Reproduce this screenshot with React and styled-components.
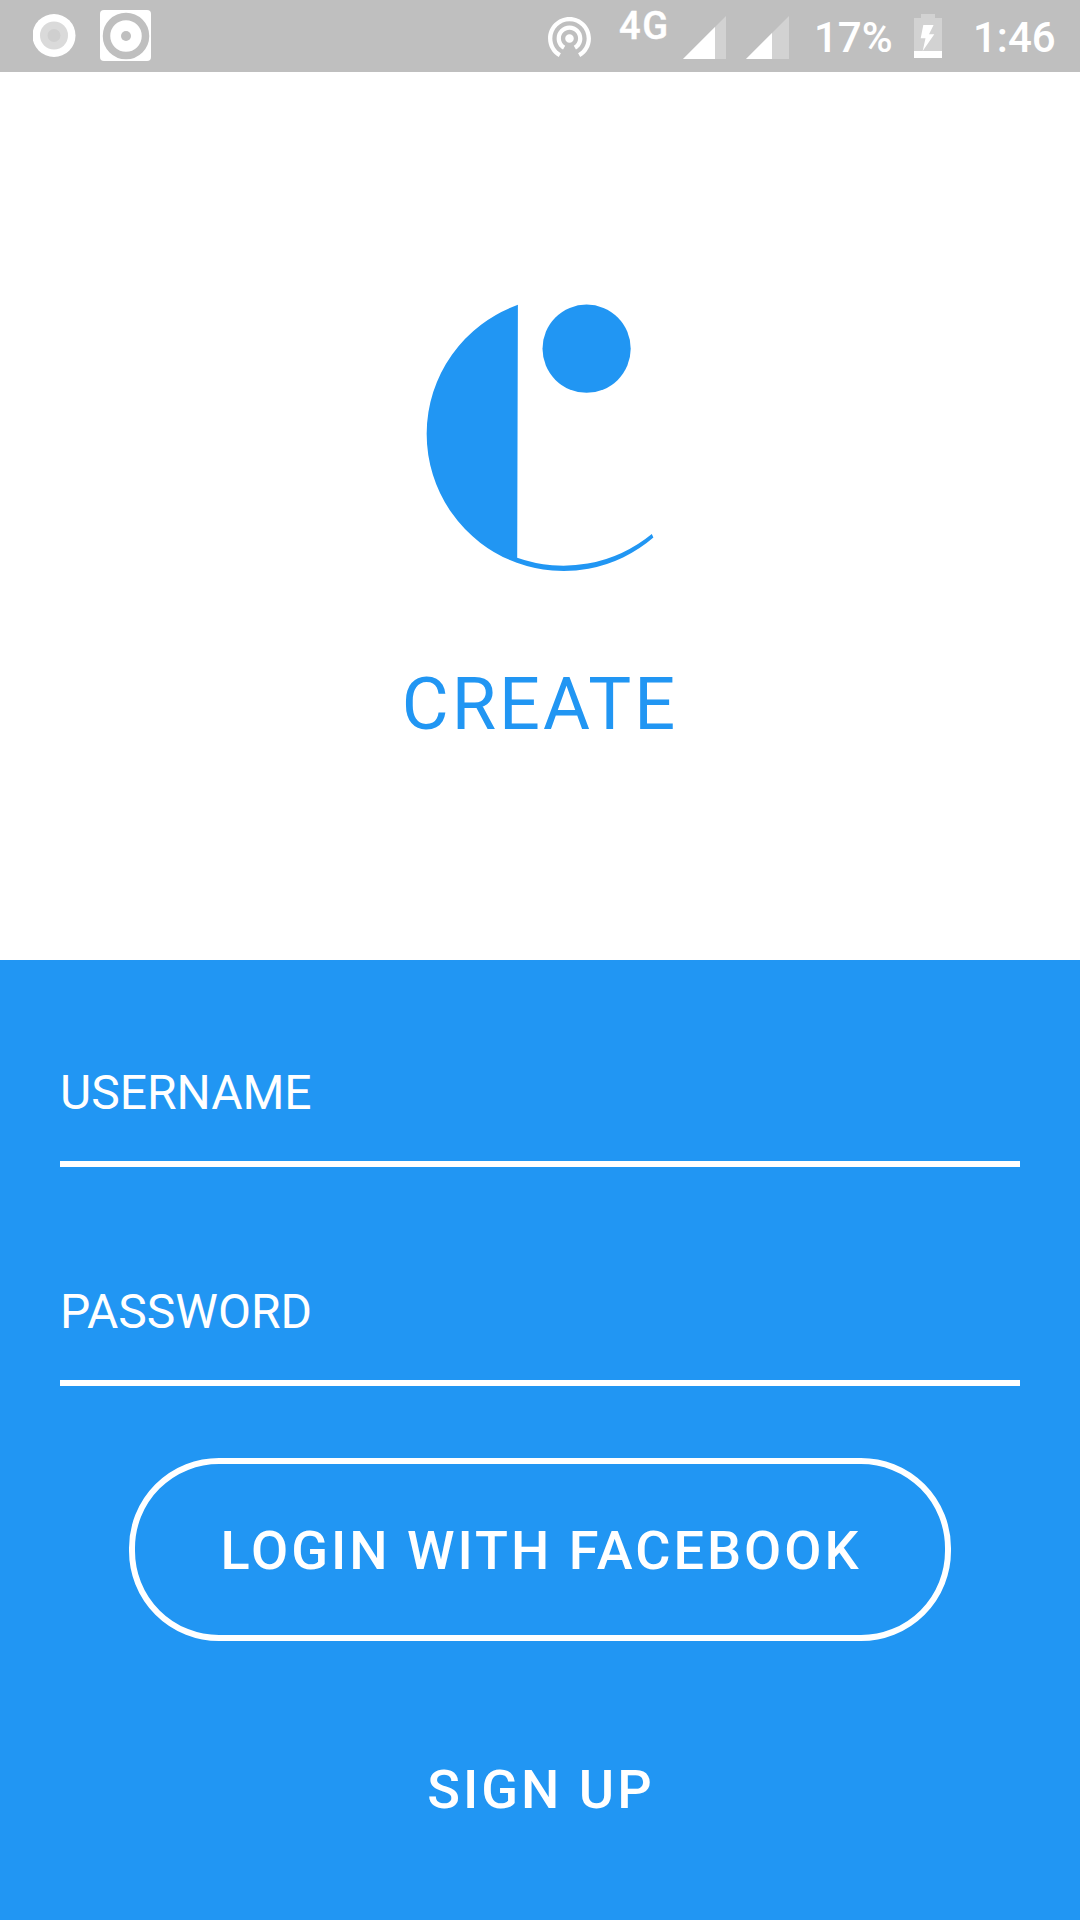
import React from "react";
import styled, { createGlobalStyle } from "styled-components";

const BLUE = "#2196f3";
const FAINT = "#d2d2d2";

const GlobalStyle = createGlobalStyle`
  *, *::before, *::after { box-sizing: border-box; }
  body { margin: 0; background: #fff; font-family: Roboto, "Noto Sans", sans-serif; }
  svg { display: block; }
`;

const Screen = styled.div`
  display: flex;
  flex-direction: column;
  width: 1080px;
  height: 1920px;
  overflow: hidden;
  background: #fff;
`;

const StatusBar = styled.header`
  display: flex;
  justify-content: space-between;
  height: 72px;
  flex: none;
  background: #bfbfbf;
  color: #fff;
`;

const StatusGroup = styled.div`
  display: grid;
  grid-template-columns: ${(p) => p.$columns};
  align-items: start;
`;

const StatusIcon = styled.svg`
  width: ${(p) => p.$w}px;
  height: ${(p) => p.$h}px;
  margin-top: ${(p) => p.$top}px;
`;

const StatusText = styled.span`
  font-size: 42px;
  line-height: 50px;
  font-weight: 500;
  margin-top: 13px;
  white-space: nowrap;
`;

const NetworkType = styled(StatusText)`
  font-size: 38px;
  line-height: 44px;
  letter-spacing: 1.6px;
  margin-top: 4px;
  -webkit-text-stroke: 0.4px #fff;
`;

const Hero = styled.section`
  display: flex;
  flex-direction: column;
  align-items: center;
  height: 888px;
  flex: none;
  padding-top: 232px;
`;

const Logo = styled.svg`
  width: 228px;
  height: 268px;
  fill: ${BLUE};
`;

const Brand = styled.h1`
  margin: 91px 0 0;
  font-size: 72px;
  line-height: 84px;
  font-weight: 400;
  letter-spacing: 3px;
  color: ${BLUE};
`;

const Form = styled.form`
  display: flex;
  flex-direction: column;
  flex: 1;
  padding: 105px 60px 0;
  background: ${BLUE};
  color: #fff;
`;

const Fields = styled.div`
  display: flex;
  flex-direction: column;
  gap: 117px;
`;

const Field = styled.label`
  display: block;
  padding-bottom: 40px;
  border-bottom: 6px solid #fff;
  font-size: 48px;
  line-height: 56px;
`;

const Button = styled.button`
  align-self: center;
  padding: 0 0 0 2px;
  border: 0;
  background: transparent;
  color: #fff;
  font-family: inherit;
  font-size: 54px;
  line-height: 64px;
  font-weight: 500;
  letter-spacing: 3px;
`;

const OutlineButton = styled(Button)`
  width: 822px;
  height: 183px;
  margin-top: 72px;
  padding-top: 2px;
  border: 6px solid #fff;
  border-radius: 90px;
`;

const TextButton = styled(Button)`
  margin-top: 117px;
`;

const Signal = ({ split }) => (
  <StatusIcon viewBox="0 0 43 43" $w={43} $h={43} $top={16}>
    <path d="M0 43L43 0V43Z" fill={FAINT} />
    <path d={`M0 43L${split} ${43 - split}V43Z`} fill="#fff" />
  </StatusIcon>
);

export default function App() {
  return (
    <Screen>
      <GlobalStyle />
      <StatusBar>
        <StatusGroup $columns="33px 67px 51px">
          <span />
          <StatusIcon viewBox="0 0 43 43" $w={43} $h={43} $top={14}>
            <circle cx="21" cy="21.5" r="21.5" fill="#fff" />
            <circle cx="21" cy="21.5" r="14" fill="#dadada" />
            <circle cx="21" cy="21.5" r="6.5" fill="#cfcfcf" />
          </StatusIcon>
          <StatusIcon viewBox="0 0 51 51" $w={51} $h={51} $top={10}>
            <rect width="51" height="51" rx="4" fill="#fff" />
            <circle cx="26" cy="26" r="19.5" fill="none" stroke="#bfbfbf" strokeWidth="7.5" />
            <circle cx="26" cy="26" r="5" fill="#bfbfbf" />
          </StatusIcon>
        </StatusGroup>
        <StatusGroup $columns="71px 64px 63px 68px 100px 59px 107px">
          <StatusIcon viewBox="2 3 20 18.65" $w={43} $h={40} $top={17}>
            <path
              fill="#fff"
              d="M12 11c-1.1 0-2 .9-2 2s.9 2 2 2 2-.9 2-2-.9-2-2-2zm6 2c0-3.31-2.69-6-6-6s-6 2.69-6 6c0 2.22 1.21 4.15 3 5.19l1-1.74c-1.19-.7-2-1.97-2-3.45 0-2.21 1.79-4 4-4s4 1.79 4 4c0 1.48-.81 2.75-2 3.45l1 1.74c1.79-1.04 3-2.97 3-5.19zM12 3C6.48 3 2 7.48 2 13c0 3.7 2.01 6.92 4.99 8.65l1-1.73C5.61 18.53 4 15.96 4 13c0-4.42 3.58-8 8-8s8 3.58 8 8c0 2.96-1.61 5.53-4 6.92l1 1.73c2.99-1.73 5-4.95 5-8.65 0-5.52-4.48-10-10-10z"
            />
          </StatusIcon>
          <NetworkType>4G</NetworkType>
          <Signal split={32} />
          <Signal split={26} />
          <StatusText>17%</StatusText>
          <StatusIcon viewBox="0 0 28 44" $w={28} $h={44} $top={14}>
            <path d="M7 0H21V4H28V44H0V4H7Z" fill={FAINT} />
            <path d="M0 37H28V44H0Z" fill="#fff" />
            <path d="M9.3 11H19.6L15 20.3H20.3L8.7 37L11.5 24.3H6.7Z" fill="#fff" />
          </StatusIcon>
          <StatusText>1:46</StatusText>
        </StatusGroup>
      </StatusBar>
      <Hero>
        <Logo viewBox="426 304 228 268">
          <path d="M517.9 304.8A137.1 137.1 0 0 0 516.8 562.8A137.3 137.3 0 0 0 653.4 537.6L651.8 534A139 139 0 0 1 517.2 557.8Z" />
          <circle cx="586.6" cy="348.7" r="44.1" />
        </Logo>
        <Brand>CREATE</Brand>
      </Hero>
      <Form>
        <Fields>
          <Field>USERNAME</Field>
          <Field>PASSWORD</Field>
        </Fields>
        <OutlineButton type="button">LOGIN WITH FACEBOOK</OutlineButton>
        <TextButton type="button">SIGN UP</TextButton>
      </Form>
    </Screen>
  );
}
